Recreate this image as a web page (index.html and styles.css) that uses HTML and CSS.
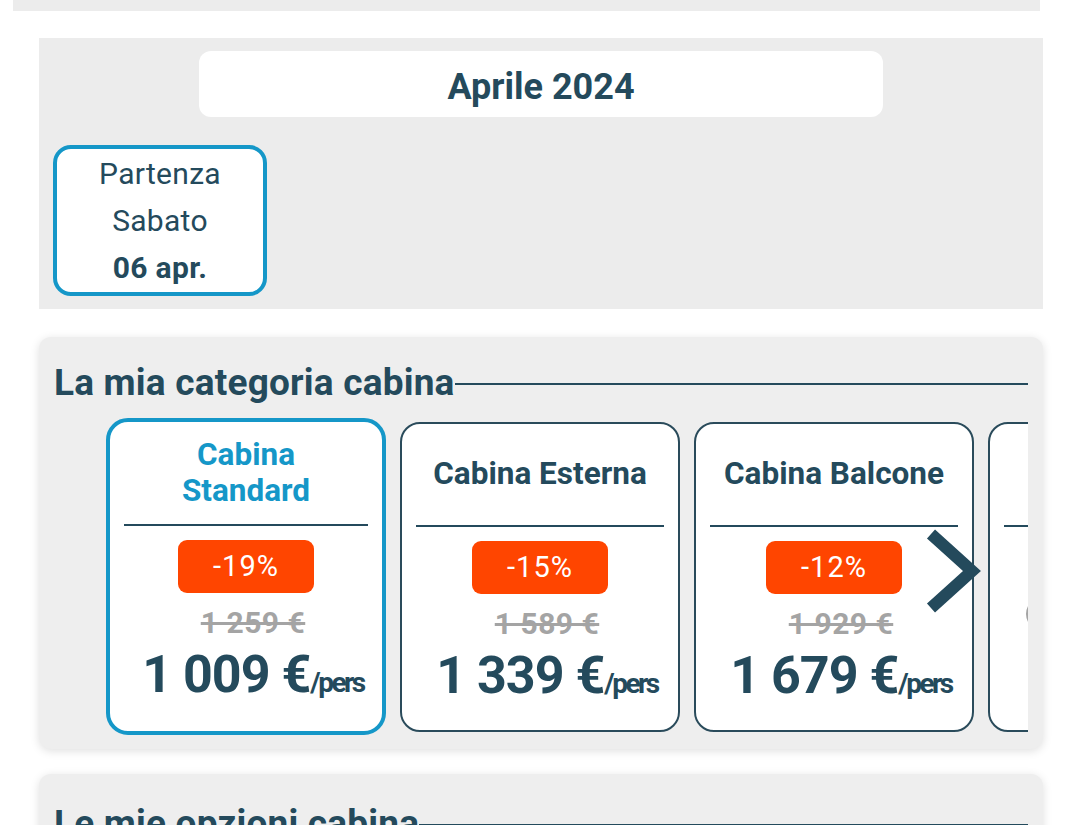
FILE: index.html
```html
<!DOCTYPE html>
<html lang="it">
<head>
    <meta charset="UTF-8">
    <meta name="viewport" content="width=device-width, initial-scale=1.0">
    <title>Scegli la tua cabina</title>
    <link rel="stylesheet" href="styles.css">
</head>
<body>
    <div class="topbar"></div>
    <main class="page">
        <section class="calendar">
            <div class="month">Aprile 2024</div>
            <div class="days">
                <div class="day selected">
                    <span>Partenza</span>
                    <span>Sabato</span>
                    <strong>06 apr.</strong>
                </div>
            </div>
        </section>

        <section class="panel">
            <h2 class="panel-title">La mia categoria cabina</h2>
            <div class="carousel">
                <div class="cabin selected">
                    <div class="cabin-head"><h3>Cabina Standard</h3></div>
                    <div class="badge">-19%</div>
                    <div class="old-price">1 259 €</div>
                    <div class="price">1 009 €<small>/pers</small></div>
                </div>
                <div class="cabin">
                    <div class="cabin-head"><h3>Cabina Esterna</h3></div>
                    <div class="badge">-15%</div>
                    <div class="old-price">1 589 €</div>
                    <div class="price">1 339 €<small>/pers</small></div>
                </div>
                <div class="cabin">
                    <div class="cabin-head"><h3>Cabina Balcone</h3></div>
                    <div class="badge">-12%</div>
                    <div class="old-price">1 929 €</div>
                    <div class="price">1 679 €<small>/pers</small></div>
                </div>
                <div class="cabin partial">
                    <div class="cabin-head"></div>
                    <div class="ghost"></div>
                </div>

                <svg class="next" width="64" height="92" viewBox="0 0 64 92">
                    <polyline points="11,9 52,46 11,83" fill="none" stroke="#244a5c" stroke-width="12" stroke-linejoin="miter"/>
                </svg>
            </div>
        </section>

        <section class="panel">
            <h2 class="panel-title">Le mie opzioni cabina</h2>
        </section>
    </main>
</body>
</html>
```

FILE: styles.css
```css
body {
    margin: 0;
    font-family: Roboto, "Noto Sans", sans-serif;
    color: #244a5c;
    background: #fff;
}
.topbar {
    height: 11px;
    margin: 0 40px 0 13px;
    background: #ececec;
}
.page {
    padding: 27px 37px 0 39px;
    display: flex;
    flex-direction: column;
    gap: 28px;
}

/* calendar */
.calendar {
    background: #ececec;
    padding: 13px 14px 13px;
}
.month {
    width: 684px;
    height: 66px;
    box-sizing: border-box;
    padding-top: 6px;
    margin: 0 auto;
    background: #fff;
    border-radius: 12px;
    display: flex;
    justify-content: center;
    align-items: center;
    font-size: 36px;
    font-weight: bold;
}
.days {
    display: flex;
    margin-top: 28px;
}
.day {
    width: 214px;
    height: 151px;
    box-sizing: border-box;
    background: #fff;
    border: 4px solid #1597c8;
    border-radius: 18px;
    display: flex;
    flex-direction: column;
    align-items: center;
    justify-content: center;
    font-size: 30px;
    line-height: 47px;
    letter-spacing: 0.3px;
}
.day strong {
    font-weight: bold;
}

/* cabin panel */
.panel {
    background: #eeeeee;
    border-radius: 12px;
    box-shadow: 0 2px 10px rgba(0, 0, 0, 0.13);
    padding: 23px 15px 14px;
}
.panel + .panel {
    margin-top: -3px;
    padding-top: 27px;
}
.panel-title {
    margin: 0;
    display: flex;
    align-items: center;
    font-size: 37px;
    line-height: 46px;
    font-weight: bold;
    letter-spacing: 0.2px;
}
.panel-title::after {
    content: "";
    flex: 1;
    height: 2px;
    margin-top: 2px;
    background: #244a5c;
}
.carousel {
    position: relative;
    margin-top: 12px;
    padding-left: 52px;
    display: flex;
    align-items: center;
    gap: 14px;
    overflow: hidden;
}
.cabin {
    flex: 0 0 280px;
    height: 310px;
    box-sizing: border-box;
    background: #fff;
    border: 2px solid #2a4b5b;
    border-radius: 20px;
    padding: 0 14px;
    display: flex;
    flex-direction: column;
    align-items: center;
    text-align: center;
}
.cabin.selected {
    height: 317px;
    border: 4px solid #1597c8;
    border-radius: 22px;
}
.cabin-head {
    align-self: stretch;
    height: 101px;
    border-bottom: 2px solid #244a5c;
    display: flex;
    align-items: center;
    justify-content: center;
}
.selected .cabin-head {
    height: 102px;
}
.cabin-head h3 {
    margin: 0;
    max-width: 226px;
    font-size: 31.5px;
    line-height: 36px;
    font-weight: bold;
}
.selected h3 {
    color: #1597c8;
}
.badge {
    width: 136px;
    height: 53px;
    margin-top: 14px;
    border-radius: 9px;
    background: #ff4500;
    color: #fff;
    font-size: 29px;
    line-height: 53px;
    letter-spacing: 1px;
}
.old-price {
    margin-top: 14px;
    padding-left: 14px;
    font-size: 30px;
    line-height: 32px;
    font-weight: bold;
    letter-spacing: 0.5px;
    color: #a4a4a4;
    text-decoration: line-through;
}
.price {
    margin-top: 8px;
    padding-left: 14px;
    font-size: 52px;
    line-height: 56px;
    font-weight: bold;
    letter-spacing: -1px;
    white-space: nowrap;
}
.price small {
    font-size: 28px;
    letter-spacing: -2.5px;
}
.cabin.partial {
    align-items: flex-start;
}
.ghost {
    width: 40px;
    height: 30px;
    margin-top: 67px;
    margin-left: 22px;
    border-radius: 50%;
    border: 5px solid #a4a4a4;
}
.next {
    position: absolute;
    left: 866px;
    top: 107px;
}
```
